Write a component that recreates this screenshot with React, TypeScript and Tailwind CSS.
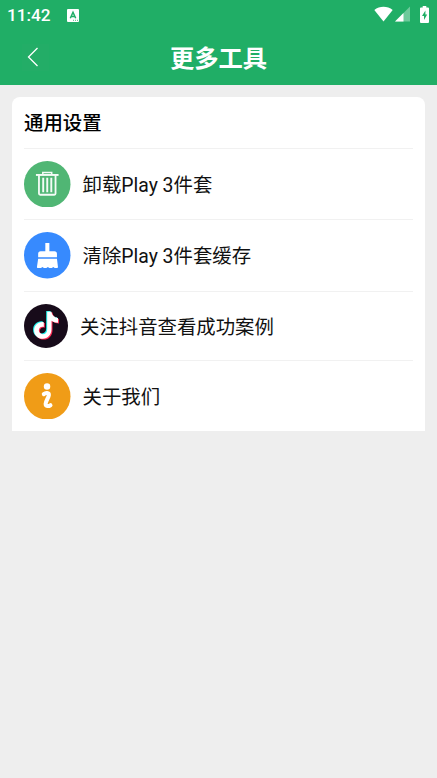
import type { ReactNode } from "react";

function TrashIcon() {
  return (
    <svg viewBox="0 0 46 46" className="size-full" fill="none" stroke="#f4fbf6">
      <circle cx="23" cy="23" r="23" fill="#50b674" stroke="none" />
      <path d="M11.8 13.8h22.4" strokeWidth="1.9" />
      <path d="M18.6 13.5v-2.2h8.8v2.2" strokeWidth="1.5" />
      <path d="M14.8 14v18.200q0 1.200 1.200 1.200h14q1.200 0 1.200-1.200V14" strokeWidth="1.8" />
      <path d="M19 16.500v14.300M23 16.500v14.300M27 16.500v14.300" strokeWidth="1.9" />
    </svg>
  );
}

function BroomIcon() {
  return (
    <svg viewBox="0 0 46 46" className="size-full" fill="#fff">
      <circle cx="23" cy="23" r="23" fill="#378afe" />
      <path d="M21.1 11h4v8h5q2.500 0 2.500 2.500V25H14v-3.500q0-2.500 2.500-2.500h4.600z" />
      <path d="M14 26.500h18.600l1 8.200q0 .9-.9.9h-2.300l-1.400-1-1.500 1h-2.400l-1.500-1-1.500 1h-2.400l-1.500-1-1.400 1h-3.200q-.9 0-.8-.9z" />
    </svg>
  );
}

const NOTE =
  "M22.2 7h4.200c.5 3.600 2.900 5.900 6.600 6.300v4.600c-2.600 0-4.800-.8-6.500-2v8.400c0 6-3.900 9.700-8.700 9.700-5 0-8.700-3.700-8.700-8.300 0-5.300 4.300-9.100 9.700-8.300v4.700c-2.700-.8-5 .9-5 3.400 0 2.300 1.800 3.900 4 3.900 2.700 0 4.400-1.800 4.400-4.800z";

function DouyinIcon() {
  return (
    <svg viewBox="0 0 44 44" className="size-full">
      <circle cx="22" cy="22" r="22" fill="#170b1a" />
      <path d={NOTE} fill="#25f4ee" />
      <path d={NOTE} fill="#fe2c55" transform="translate(2 1.6)" />
      <path d={NOTE} fill="#fff" transform="translate(1 .8)" />
    </svg>
  );
}

function InfoIcon() {
  return (
    <svg viewBox="0 0 46 46" className="size-full">
      <circle cx="23" cy="23" r="23" fill="#f09c17" />
      <circle cx="22.800" cy="13.400" r="3.200" fill="#fff" />
      <path
        d="M19.600 20.900c1.800-1.500 5.200-1.500 5 .9-.2 2.400-3.200 6-3.200 8.700 0 2.800 3 2.600 4.800 1.400"
        fill="none"
        stroke="#fff"
        strokeWidth="4"
        strokeLinecap="round"
        strokeLinejoin="round"
      />
    </svg>
  );
}

type Item = { label: string; icon: ReactNode; row: string; iconBox: string };

const ITEMS: Item[] = [
  { label: "卸载Play 3件套", icon: <TrashIcon />, row: "h-[71px]", iconBox: "size-[46.5px]" },
  { label: "清除Play 3件套缓存", icon: <BroomIcon />, row: "h-[72px]", iconBox: "size-[46.5px]" },
  { label: "关注抖音查看成功案例", icon: <DouyinIcon />, row: "h-[69px]", iconBox: "size-[44px]" },
  { label: "关于我们", icon: <InfoIcon />, row: "h-[70px]", iconBox: "size-[46.5px]" },
];

function StatusBar() {
  return (
    <div className="flex h-[30px] items-center pr-2 pl-[7px] text-white">
      <span className="w-[60px] pt-[2px] text-[17.2px] leading-none font-medium">11:42</span>
      <svg width="12" height="13" viewBox="0 0 12 13">
        <rect width="12" height="13" rx="1" fill="#fff" />
        <path d="M3.3 9.2 6 3.3l2.7 5.9M4.3 7.4h3.4" fill="none" stroke="#20ae66" strokeWidth="1.5" />
        <path d="M6 11.3h1M8 11.3h1M10 11.3h1" stroke="#20ae66" strokeWidth=".8" />
      </svg>
      <div className="ml-auto flex h-[28px] items-center self-start">
        <svg width="19" height="16" viewBox="0 0 19 16">
          <path d="M.3 3.900C5.600-.3 13.400-.3 18.700 3.900L9.500 15.400z" fill="#fff" />
        </svg>
        <svg width="15" height="16" viewBox="0 0 15 16" className="ml-[2px]">
          <path d="M15 .5v15H0z" fill="#fff" opacity=".35" />
          <path d="M8.500 7v8.500H0z" fill="#fff" />
        </svg>
        <svg width="9" height="17" viewBox="0 0 9 17" className="ml-[10px]">
          <path d="M2.700 0h3.600v1.600H8q1 0 1 1V16q0 1-1 1H1q-1 0-1-1V2.600q0-1 1-1h1.700z" fill="#fff" />
          <path d="M5.400 4.600 2 10h2v3.900L7.200 8.500H5.400z" fill="#20ae66" />
        </svg>
      </div>
    </div>
  );
}

export default function App() {
  return (
    <div className="min-h-screen bg-[#eeeeee] font-[Roboto,'Noto_Sans_CJK_SC',sans-serif] text-[#111]">
      <header className="h-[85px] bg-[#20ae66]">
        <StatusBar />
        <div className="grid h-[55px] grid-cols-[80px_1fr_80px] items-center text-white">
          <button aria-label="返回" className="ml-[22px] flex size-[27px] items-center justify-center bg-[#23ad67] pr-[5px] pb-[2px]">
            <svg width="12" height="20" viewBox="0 0 12 20" fill="none" stroke="#fff" strokeWidth="1.3">
              <path d="M10.500 1 1.500 10l9 9" />
            </svg>
          </button>
          <h1 className="pt-[3px] text-center text-[24.3px] leading-none font-bold">更多工具</h1>
        </div>
      </header>

      <main className="mx-3 mt-3 rounded-t-lg bg-white px-3">
        <h2 className="flex h-[52px] items-center border-b border-[#f1f1f1] pt-[3px] text-[19.4px] leading-none font-medium text-black">
          通用设置
        </h2>
        <ul>
          {ITEMS.map((item) => (
            <li key={item.label} className={`flex items-center gap-3 border-b border-[#f1f1f1] last:border-b-0 ${item.row}`}>
              <div className={`shrink-0 ${item.iconBox}`}>{item.icon}</div>
              <span className="pt-[3px] text-[19.4px] leading-none">{item.label}</span>
            </li>
          ))}
        </ul>
      </main>
    </div>
  );
}
